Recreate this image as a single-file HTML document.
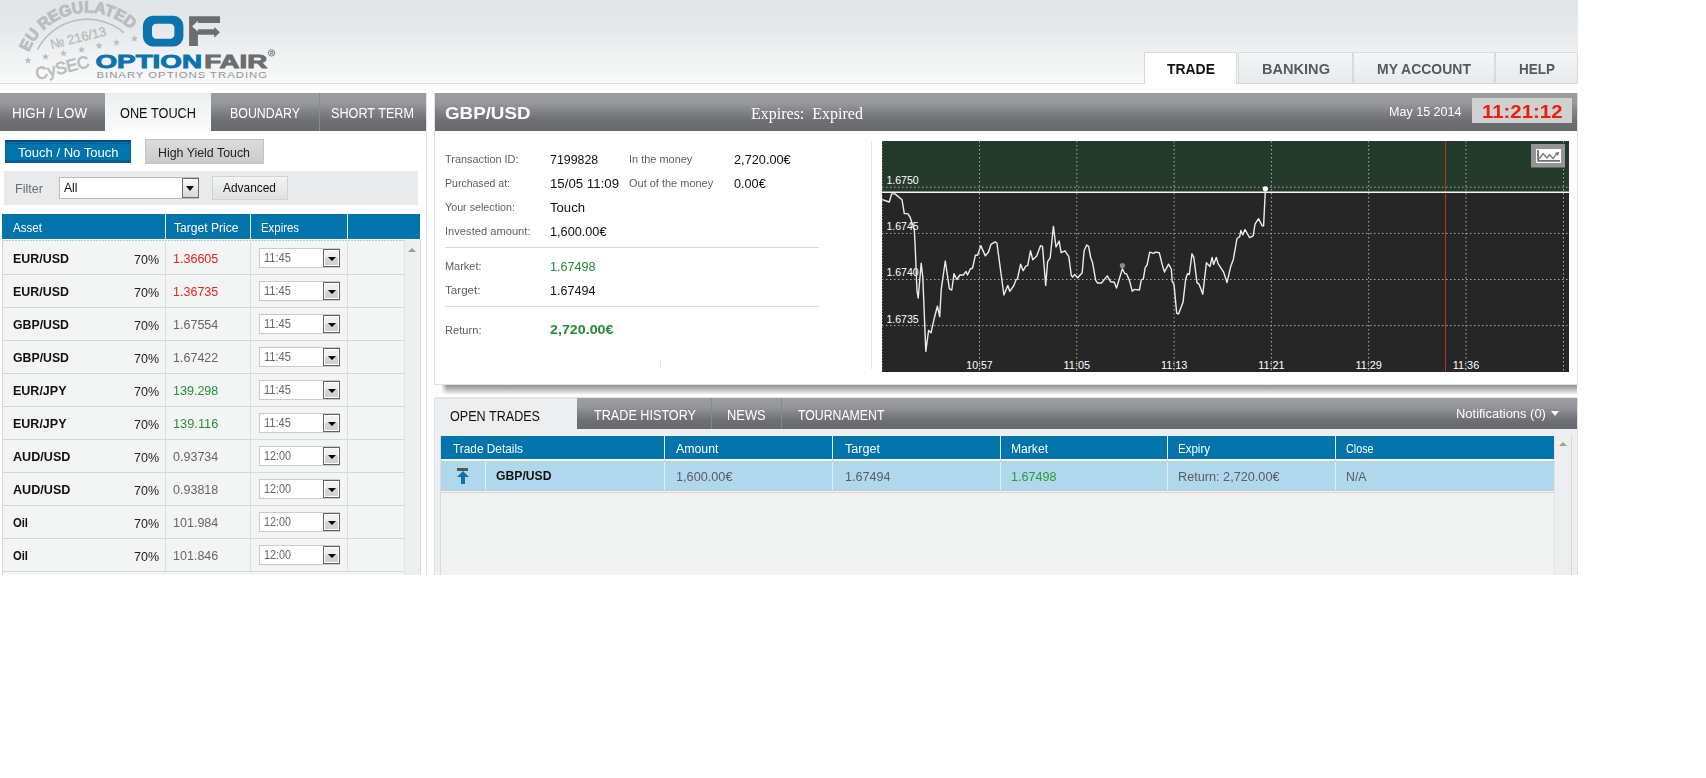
<!DOCTYPE html>
<html><head><meta charset="utf-8"><title>OptionFair</title>
<style>
html,body{margin:0;padding:0;background:#fff;}
body{width:1706px;height:778px;overflow:hidden;position:relative;font-family:"Liberation Sans",sans-serif;}
#root>div{position:absolute;}
</style></head><body><div id="root">
<div style="left:0px;top:0px;width:1578px;height:83px;background:linear-gradient(#e1e5e7 0%,#e6e9eb 35%,#f9fafa 100%);"></div>
<div style="left:0px;top:83px;width:1578px;height:1px;background:#d9e0e2;"></div>
<div style="left:1144px;top:52px;width:93px;height:32px;background:#fff;border:1px solid #d5dcdf;border-bottom:none;box-sizing:border-box;"></div>
<div style="left:1145px;top:83px;width:91px;height:1px;background:#fff;"></div>
<div style="left:1167.00px;top:59.76px;font-family:'Liberation Sans', sans-serif;font-size:14.24px;line-height:18px;font-weight:700;color:#111;white-space:nowrap;transform:scaleX(0.9783);transform-origin:0 0;">TRADE</div>
<div style="left:1238px;top:52px;width:115px;height:32px;background:linear-gradient(#f4f5f6,#e7eaeb);border:1px solid #d5dcdf;box-sizing:border-box;"></div>
<div style="left:1262.00px;top:59.76px;font-family:'Liberation Sans', sans-serif;font-size:14.24px;line-height:18px;font-weight:700;color:#555a5f;white-space:nowrap;transform:scaleX(1.0230);transform-origin:0 0;">BANKING</div>
<div style="left:1353px;top:52px;width:142px;height:32px;background:linear-gradient(#f4f5f6,#e7eaeb);border:1px solid #d5dcdf;box-sizing:border-box;"></div>
<div style="left:1377.00px;top:59.76px;font-family:'Liberation Sans', sans-serif;font-size:14.24px;line-height:18px;font-weight:700;color:#555a5f;white-space:nowrap;transform:scaleX(0.9817);transform-origin:0 0;">MY ACCOUNT</div>
<div style="left:1495px;top:52px;width:83px;height:32px;background:linear-gradient(#f4f5f6,#e7eaeb);border:1px solid #d5dcdf;box-sizing:border-box;"></div>
<div style="left:1519.00px;top:59.76px;font-family:'Liberation Sans', sans-serif;font-size:14.24px;line-height:18px;font-weight:700;color:#555a5f;white-space:nowrap;transform:scaleX(0.9476);transform-origin:0 0;">HELP</div>
<div style="left:426px;top:93px;width:1px;height:482px;background:#dfe4e6;"></div>
<div style="left:0px;top:93px;width:105px;height:38px;background:linear-gradient(#9d9ea2 0%,#96979b 28%,#7f8084 52%,#6d6e71 75%,#696a6d 100%);"></div>
<div style="left:12.00px;top:103.86px;font-family:'Liberation Sans', sans-serif;font-size:14.83px;line-height:18px;font-weight:400;color:#fff;white-space:nowrap;transform:scaleX(0.9015);transform-origin:0 0;">HIGH / LOW</div>
<div style="left:105px;top:93px;width:106px;height:38px;background:linear-gradient(#eceff0,#fafbfb);"></div>
<div style="left:120.00px;top:103.86px;font-family:'Liberation Sans', sans-serif;font-size:14.83px;line-height:18px;font-weight:400;color:#111;white-space:nowrap;transform:scaleX(0.8595);transform-origin:0 0;">ONE TOUCH</div>
<div style="left:211px;top:93px;width:108px;height:38px;background:linear-gradient(#9d9ea2 0%,#96979b 28%,#7f8084 52%,#6d6e71 75%,#696a6d 100%);"></div>
<div style="left:230.00px;top:103.86px;font-family:'Liberation Sans', sans-serif;font-size:14.83px;line-height:18px;font-weight:400;color:#fff;white-space:nowrap;transform:scaleX(0.8357);transform-origin:0 0;">BOUNDARY</div>
<div style="left:319px;top:93px;width:107px;height:38px;background:linear-gradient(#9d9ea2 0%,#96979b 28%,#7f8084 52%,#6d6e71 75%,#696a6d 100%);"></div>
<div style="left:331.00px;top:103.86px;font-family:'Liberation Sans', sans-serif;font-size:14.83px;line-height:18px;font-weight:400;color:#fff;white-space:nowrap;transform:scaleX(0.8538);transform-origin:0 0;">SHORT TERM</div>
<div style="left:319px;top:93px;width:1px;height:38px;background:#8a8b8e;"></div>
<div style="left:5px;top:140px;width:126px;height:23px;background:#0074ab;border:1px solid #0a5f95;border-top:2px solid #004b8a;box-sizing:border-box;"></div>
<div style="left:7px;top:143px;width:123px;height:1px;background:repeating-linear-gradient(90deg,#0b4f85 0 2px,transparent 2px 3px);"></div>
<div style="left:6px;top:160px;width:124px;height:2px;background:repeating-linear-gradient(90deg,#0b4f85 0 1px,#1264a0 1px 2px);"></div>
<div style="left:18.00px;top:144.01px;font-family:'Liberation Sans', sans-serif;font-size:13.52px;line-height:17px;font-weight:400;color:#fff;white-space:nowrap;transform:scaleX(0.9645);transform-origin:0 0;">Touch / No Touch</div>
<div style="left:145px;top:139px;width:119px;height:25px;background:linear-gradient(#dcdcdc,#c9caca);border:1px solid #c2c4c4;box-sizing:border-box;"></div>
<div style="left:158.00px;top:144.01px;font-family:'Liberation Sans', sans-serif;font-size:13.52px;line-height:17px;font-weight:400;color:#222;white-space:nowrap;transform:scaleX(0.9158);transform-origin:0 0;">High Yield Touch</div>
<div style="left:4px;top:171px;width:414px;height:34px;background:#e8eaeb;"></div>
<div style="left:15.30px;top:181.06px;font-family:'Liberation Sans', sans-serif;font-size:13.08px;line-height:16px;font-weight:400;color:#6b6d70;white-space:nowrap;transform:scaleX(0.9632);transform-origin:0 0;">Filter</div>
<div style="left:59px;top:177px;width:140px;height:22px;background:#fff;border:1px solid #b9bcbe;box-sizing:border-box;"></div>
<div style="left:182px;top:178px;width:17px;height:20px;background:linear-gradient(#fafafa,#d6d7d8);border:1px solid #6a6c6e;box-sizing:border-box;"></div>
<div style="left:186px;top:186px;width:0;height:0;border-left:4.5px solid transparent;border-right:4.5px solid transparent;border-top:5px solid #111;"></div>
<div style="left:64.00px;top:180.26px;font-family:'Liberation Sans', sans-serif;font-size:13.08px;line-height:16px;font-weight:400;color:#111;white-space:nowrap;transform:scaleX(0.9285);transform-origin:0 0;">All</div>
<div style="left:212px;top:176px;width:76px;height:24px;background:linear-gradient(#f3f4f4,#dfe1e2);border:1px solid #d0d3d4;box-sizing:border-box;"></div>
<div style="left:223.40px;top:180.46px;font-family:'Liberation Sans', sans-serif;font-size:13.08px;line-height:16px;font-weight:400;color:#111;white-space:nowrap;transform:scaleX(0.9109);transform-origin:0 0;">Advanced</div>
<div style="left:2px;top:214px;width:418px;height:25px;background:#0074ab;"></div>
<div style="left:165px;top:214px;width:1px;height:25px;background:#e9f1f6;"></div>
<div style="left:250px;top:214px;width:1px;height:25px;background:#e9f1f6;"></div>
<div style="left:347px;top:214px;width:1px;height:25px;background:#e9f1f6;"></div>
<div style="left:13.00px;top:219.57px;font-family:'Liberation Sans', sans-serif;font-size:12.50px;line-height:16px;font-weight:400;color:#fff;white-space:nowrap;transform:scaleX(0.9276);transform-origin:0 0;">Asset</div>
<div style="left:174.00px;top:219.57px;font-family:'Liberation Sans', sans-serif;font-size:12.50px;line-height:16px;font-weight:400;color:#fff;white-space:nowrap;transform:scaleX(0.9671);transform-origin:0 0;">Target Price</div>
<div style="left:261.30px;top:219.57px;font-family:'Liberation Sans', sans-serif;font-size:12.50px;line-height:16px;font-weight:400;color:#fff;white-space:nowrap;transform:scaleX(0.9116);transform-origin:0 0;">Expires</div>
<div style="left:2px;top:240px;width:402px;height:335px;background:#f3f4f4;"></div>
<div style="left:2px;top:240px;width:1px;height:335px;background:#d4d7d9;"></div>
<div style="left:3px;top:240px;width:401px;height:1px;background:repeating-linear-gradient(90deg,#c3c6c8 0 2px,transparent 2px 3px);"></div>
<div style="left:404px;top:240px;width:17px;height:335px;background:#eceeef;border-left:1px solid #e1e4e5;border-right:1px solid #d5d8da;box-sizing:border-box;"></div>
<div style="left:420px;top:240px;width:1px;height:335px;background:#d9dcde;"></div>
<div style="left:408px;top:248px;width:0;height:0;border-left:4px solid transparent;border-right:4px solid transparent;border-bottom:4px solid #9a9c9e;"></div>
<div style="left:2px;top:274px;width:402px;height:1px;background:#d5d8d9;"></div>
<div style="left:165px;top:241px;width:1px;height:33px;background:#dcdfe0;"></div>
<div style="left:250px;top:241px;width:1px;height:33px;background:#dcdfe0;"></div>
<div style="left:347px;top:241px;width:1px;height:33px;background:#dcdfe0;"></div>
<div style="left:13.00px;top:251.46px;font-family:'Liberation Sans', sans-serif;font-size:13.08px;line-height:16px;font-weight:700;color:#111;white-space:nowrap;transform:scaleX(0.9512);transform-origin:0 0;">EUR/USD</div>
<div style="left:133.70px;top:252.16px;font-family:'Liberation Sans', sans-serif;font-size:13.08px;line-height:16px;font-weight:400;color:#222;white-space:nowrap;transform:scaleX(0.9548);transform-origin:0 0;">70%</div>
<div style="left:173.40px;top:250.86px;font-family:'Liberation Sans', sans-serif;font-size:13.08px;line-height:16px;font-weight:400;color:#e8231a;white-space:nowrap;transform:scaleX(0.9580);transform-origin:0 0;">1.36605</div>
<div style="left:259px;top:248px;width:81px;height:20px;background:#fff;border:1px solid #c9cccd;box-sizing:border-box;"></div>
<div style="left:323px;top:249px;width:17px;height:18px;background:linear-gradient(#f4f4f5 0%,#ececed 45%,#d2d3d3 50%,#cfd0d0 100%);border:1px solid #5f6163;box-shadow:inset 0 0 0 1px #fff;box-sizing:border-box;"></div>
<div style="left:327.5px;top:257px;width:0;height:0;border-left:4px solid transparent;border-right:4px solid transparent;border-top:4.5px solid #000;"></div>
<div style="left:264.00px;top:251.22px;font-family:'Liberation Sans', sans-serif;font-size:12.35px;line-height:15px;font-weight:400;color:#666;white-space:nowrap;transform:scaleX(0.9000);transform-origin:0 0;">11:45</div>
<div style="left:2px;top:307px;width:402px;height:1px;background:#d5d8d9;"></div>
<div style="left:165px;top:274px;width:1px;height:33px;background:#dcdfe0;"></div>
<div style="left:250px;top:274px;width:1px;height:33px;background:#dcdfe0;"></div>
<div style="left:347px;top:274px;width:1px;height:33px;background:#dcdfe0;"></div>
<div style="left:13.00px;top:284.46px;font-family:'Liberation Sans', sans-serif;font-size:13.08px;line-height:16px;font-weight:700;color:#111;white-space:nowrap;transform:scaleX(0.9512);transform-origin:0 0;">EUR/USD</div>
<div style="left:133.70px;top:285.16px;font-family:'Liberation Sans', sans-serif;font-size:13.08px;line-height:16px;font-weight:400;color:#222;white-space:nowrap;transform:scaleX(0.9548);transform-origin:0 0;">70%</div>
<div style="left:173.40px;top:283.86px;font-family:'Liberation Sans', sans-serif;font-size:13.08px;line-height:16px;font-weight:400;color:#e8231a;white-space:nowrap;transform:scaleX(0.9580);transform-origin:0 0;">1.36735</div>
<div style="left:259px;top:281px;width:81px;height:20px;background:#fff;border:1px solid #c9cccd;box-sizing:border-box;"></div>
<div style="left:323px;top:282px;width:17px;height:18px;background:linear-gradient(#f4f4f5 0%,#ececed 45%,#d2d3d3 50%,#cfd0d0 100%);border:1px solid #5f6163;box-shadow:inset 0 0 0 1px #fff;box-sizing:border-box;"></div>
<div style="left:327.5px;top:290px;width:0;height:0;border-left:4px solid transparent;border-right:4px solid transparent;border-top:4.5px solid #000;"></div>
<div style="left:264.00px;top:284.22px;font-family:'Liberation Sans', sans-serif;font-size:12.35px;line-height:15px;font-weight:400;color:#666;white-space:nowrap;transform:scaleX(0.9000);transform-origin:0 0;">11:45</div>
<div style="left:2px;top:340px;width:402px;height:1px;background:#d5d8d9;"></div>
<div style="left:165px;top:307px;width:1px;height:33px;background:#dcdfe0;"></div>
<div style="left:250px;top:307px;width:1px;height:33px;background:#dcdfe0;"></div>
<div style="left:347px;top:307px;width:1px;height:33px;background:#dcdfe0;"></div>
<div style="left:13.00px;top:317.46px;font-family:'Liberation Sans', sans-serif;font-size:13.08px;line-height:16px;font-weight:700;color:#111;white-space:nowrap;transform:scaleX(0.9395);transform-origin:0 0;">GBP/USD</div>
<div style="left:133.70px;top:318.16px;font-family:'Liberation Sans', sans-serif;font-size:13.08px;line-height:16px;font-weight:400;color:#222;white-space:nowrap;transform:scaleX(0.9548);transform-origin:0 0;">70%</div>
<div style="left:173.40px;top:316.86px;font-family:'Liberation Sans', sans-serif;font-size:13.08px;line-height:16px;font-weight:400;color:#666;white-space:nowrap;transform:scaleX(0.9580);transform-origin:0 0;">1.67554</div>
<div style="left:259px;top:314px;width:81px;height:20px;background:#fff;border:1px solid #c9cccd;box-sizing:border-box;"></div>
<div style="left:323px;top:315px;width:17px;height:18px;background:linear-gradient(#f4f4f5 0%,#ececed 45%,#d2d3d3 50%,#cfd0d0 100%);border:1px solid #5f6163;box-shadow:inset 0 0 0 1px #fff;box-sizing:border-box;"></div>
<div style="left:327.5px;top:323px;width:0;height:0;border-left:4px solid transparent;border-right:4px solid transparent;border-top:4.5px solid #000;"></div>
<div style="left:264.00px;top:317.22px;font-family:'Liberation Sans', sans-serif;font-size:12.35px;line-height:15px;font-weight:400;color:#666;white-space:nowrap;transform:scaleX(0.9000);transform-origin:0 0;">11:45</div>
<div style="left:2px;top:373px;width:402px;height:1px;background:#d5d8d9;"></div>
<div style="left:165px;top:340px;width:1px;height:33px;background:#dcdfe0;"></div>
<div style="left:250px;top:340px;width:1px;height:33px;background:#dcdfe0;"></div>
<div style="left:347px;top:340px;width:1px;height:33px;background:#dcdfe0;"></div>
<div style="left:13.00px;top:350.46px;font-family:'Liberation Sans', sans-serif;font-size:13.08px;line-height:16px;font-weight:700;color:#111;white-space:nowrap;transform:scaleX(0.9395);transform-origin:0 0;">GBP/USD</div>
<div style="left:133.70px;top:351.16px;font-family:'Liberation Sans', sans-serif;font-size:13.08px;line-height:16px;font-weight:400;color:#222;white-space:nowrap;transform:scaleX(0.9548);transform-origin:0 0;">70%</div>
<div style="left:173.40px;top:349.86px;font-family:'Liberation Sans', sans-serif;font-size:13.08px;line-height:16px;font-weight:400;color:#666;white-space:nowrap;transform:scaleX(0.9580);transform-origin:0 0;">1.67422</div>
<div style="left:259px;top:347px;width:81px;height:20px;background:#fff;border:1px solid #c9cccd;box-sizing:border-box;"></div>
<div style="left:323px;top:348px;width:17px;height:18px;background:linear-gradient(#f4f4f5 0%,#ececed 45%,#d2d3d3 50%,#cfd0d0 100%);border:1px solid #5f6163;box-shadow:inset 0 0 0 1px #fff;box-sizing:border-box;"></div>
<div style="left:327.5px;top:356px;width:0;height:0;border-left:4px solid transparent;border-right:4px solid transparent;border-top:4.5px solid #000;"></div>
<div style="left:264.00px;top:350.22px;font-family:'Liberation Sans', sans-serif;font-size:12.35px;line-height:15px;font-weight:400;color:#666;white-space:nowrap;transform:scaleX(0.9000);transform-origin:0 0;">11:45</div>
<div style="left:2px;top:406px;width:402px;height:1px;background:#d5d8d9;"></div>
<div style="left:165px;top:373px;width:1px;height:33px;background:#dcdfe0;"></div>
<div style="left:250px;top:373px;width:1px;height:33px;background:#dcdfe0;"></div>
<div style="left:347px;top:373px;width:1px;height:33px;background:#dcdfe0;"></div>
<div style="left:13.00px;top:383.46px;font-family:'Liberation Sans', sans-serif;font-size:13.08px;line-height:16px;font-weight:700;color:#111;white-space:nowrap;transform:scaleX(0.9557);transform-origin:0 0;">EUR/JPY</div>
<div style="left:133.70px;top:384.16px;font-family:'Liberation Sans', sans-serif;font-size:13.08px;line-height:16px;font-weight:400;color:#222;white-space:nowrap;transform:scaleX(0.9548);transform-origin:0 0;">70%</div>
<div style="left:173.40px;top:382.86px;font-family:'Liberation Sans', sans-serif;font-size:13.08px;line-height:16px;font-weight:400;color:#26903a;white-space:nowrap;transform:scaleX(0.9580);transform-origin:0 0;">139.298</div>
<div style="left:259px;top:380px;width:81px;height:20px;background:#fff;border:1px solid #c9cccd;box-sizing:border-box;"></div>
<div style="left:323px;top:381px;width:17px;height:18px;background:linear-gradient(#f4f4f5 0%,#ececed 45%,#d2d3d3 50%,#cfd0d0 100%);border:1px solid #5f6163;box-shadow:inset 0 0 0 1px #fff;box-sizing:border-box;"></div>
<div style="left:327.5px;top:389px;width:0;height:0;border-left:4px solid transparent;border-right:4px solid transparent;border-top:4.5px solid #000;"></div>
<div style="left:264.00px;top:383.22px;font-family:'Liberation Sans', sans-serif;font-size:12.35px;line-height:15px;font-weight:400;color:#666;white-space:nowrap;transform:scaleX(0.9000);transform-origin:0 0;">11:45</div>
<div style="left:2px;top:439px;width:402px;height:1px;background:#d5d8d9;"></div>
<div style="left:165px;top:406px;width:1px;height:33px;background:#dcdfe0;"></div>
<div style="left:250px;top:406px;width:1px;height:33px;background:#dcdfe0;"></div>
<div style="left:347px;top:406px;width:1px;height:33px;background:#dcdfe0;"></div>
<div style="left:13.00px;top:416.46px;font-family:'Liberation Sans', sans-serif;font-size:13.08px;line-height:16px;font-weight:700;color:#111;white-space:nowrap;transform:scaleX(0.9557);transform-origin:0 0;">EUR/JPY</div>
<div style="left:133.70px;top:417.16px;font-family:'Liberation Sans', sans-serif;font-size:13.08px;line-height:16px;font-weight:400;color:#222;white-space:nowrap;transform:scaleX(0.9548);transform-origin:0 0;">70%</div>
<div style="left:173.40px;top:415.86px;font-family:'Liberation Sans', sans-serif;font-size:13.08px;line-height:16px;font-weight:400;color:#26903a;white-space:nowrap;transform:scaleX(0.9780);transform-origin:0 0;">139.116</div>
<div style="left:259px;top:413px;width:81px;height:20px;background:#fff;border:1px solid #c9cccd;box-sizing:border-box;"></div>
<div style="left:323px;top:414px;width:17px;height:18px;background:linear-gradient(#f4f4f5 0%,#ececed 45%,#d2d3d3 50%,#cfd0d0 100%);border:1px solid #5f6163;box-shadow:inset 0 0 0 1px #fff;box-sizing:border-box;"></div>
<div style="left:327.5px;top:422px;width:0;height:0;border-left:4px solid transparent;border-right:4px solid transparent;border-top:4.5px solid #000;"></div>
<div style="left:264.00px;top:416.22px;font-family:'Liberation Sans', sans-serif;font-size:12.35px;line-height:15px;font-weight:400;color:#666;white-space:nowrap;transform:scaleX(0.9000);transform-origin:0 0;">11:45</div>
<div style="left:2px;top:472px;width:402px;height:1px;background:#d5d8d9;"></div>
<div style="left:165px;top:439px;width:1px;height:33px;background:#dcdfe0;"></div>
<div style="left:250px;top:439px;width:1px;height:33px;background:#dcdfe0;"></div>
<div style="left:347px;top:439px;width:1px;height:33px;background:#dcdfe0;"></div>
<div style="left:13.00px;top:449.46px;font-family:'Liberation Sans', sans-serif;font-size:13.08px;line-height:16px;font-weight:700;color:#111;white-space:nowrap;transform:scaleX(0.9648);transform-origin:0 0;">AUD/USD</div>
<div style="left:133.70px;top:450.16px;font-family:'Liberation Sans', sans-serif;font-size:13.08px;line-height:16px;font-weight:400;color:#222;white-space:nowrap;transform:scaleX(0.9548);transform-origin:0 0;">70%</div>
<div style="left:173.40px;top:448.86px;font-family:'Liberation Sans', sans-serif;font-size:13.08px;line-height:16px;font-weight:400;color:#666;white-space:nowrap;transform:scaleX(0.9580);transform-origin:0 0;">0.93734</div>
<div style="left:259px;top:446px;width:81px;height:20px;background:#fff;border:1px solid #c9cccd;box-sizing:border-box;"></div>
<div style="left:323px;top:447px;width:17px;height:18px;background:linear-gradient(#f4f4f5 0%,#ececed 45%,#d2d3d3 50%,#cfd0d0 100%);border:1px solid #5f6163;box-shadow:inset 0 0 0 1px #fff;box-sizing:border-box;"></div>
<div style="left:327.5px;top:455px;width:0;height:0;border-left:4px solid transparent;border-right:4px solid transparent;border-top:4.5px solid #000;"></div>
<div style="left:264.00px;top:449.22px;font-family:'Liberation Sans', sans-serif;font-size:12.35px;line-height:15px;font-weight:400;color:#666;white-space:nowrap;transform:scaleX(0.8733);transform-origin:0 0;">12:00</div>
<div style="left:2px;top:505px;width:402px;height:1px;background:#d5d8d9;"></div>
<div style="left:165px;top:472px;width:1px;height:33px;background:#dcdfe0;"></div>
<div style="left:250px;top:472px;width:1px;height:33px;background:#dcdfe0;"></div>
<div style="left:347px;top:472px;width:1px;height:33px;background:#dcdfe0;"></div>
<div style="left:13.00px;top:482.46px;font-family:'Liberation Sans', sans-serif;font-size:13.08px;line-height:16px;font-weight:700;color:#111;white-space:nowrap;transform:scaleX(0.9648);transform-origin:0 0;">AUD/USD</div>
<div style="left:133.70px;top:483.16px;font-family:'Liberation Sans', sans-serif;font-size:13.08px;line-height:16px;font-weight:400;color:#222;white-space:nowrap;transform:scaleX(0.9548);transform-origin:0 0;">70%</div>
<div style="left:173.40px;top:481.86px;font-family:'Liberation Sans', sans-serif;font-size:13.08px;line-height:16px;font-weight:400;color:#666;white-space:nowrap;transform:scaleX(0.9580);transform-origin:0 0;">0.93818</div>
<div style="left:259px;top:479px;width:81px;height:20px;background:#fff;border:1px solid #c9cccd;box-sizing:border-box;"></div>
<div style="left:323px;top:480px;width:17px;height:18px;background:linear-gradient(#f4f4f5 0%,#ececed 45%,#d2d3d3 50%,#cfd0d0 100%);border:1px solid #5f6163;box-shadow:inset 0 0 0 1px #fff;box-sizing:border-box;"></div>
<div style="left:327.5px;top:488px;width:0;height:0;border-left:4px solid transparent;border-right:4px solid transparent;border-top:4.5px solid #000;"></div>
<div style="left:264.00px;top:482.22px;font-family:'Liberation Sans', sans-serif;font-size:12.35px;line-height:15px;font-weight:400;color:#666;white-space:nowrap;transform:scaleX(0.8733);transform-origin:0 0;">12:00</div>
<div style="left:2px;top:538px;width:402px;height:1px;background:#d5d8d9;"></div>
<div style="left:165px;top:505px;width:1px;height:33px;background:#dcdfe0;"></div>
<div style="left:250px;top:505px;width:1px;height:33px;background:#dcdfe0;"></div>
<div style="left:347px;top:505px;width:1px;height:33px;background:#dcdfe0;"></div>
<div style="left:13.00px;top:515.46px;font-family:'Liberation Sans', sans-serif;font-size:13.08px;line-height:16px;font-weight:700;color:#111;white-space:nowrap;transform:scaleX(0.8599);transform-origin:0 0;">Oil</div>
<div style="left:133.70px;top:516.16px;font-family:'Liberation Sans', sans-serif;font-size:13.08px;line-height:16px;font-weight:400;color:#222;white-space:nowrap;transform:scaleX(0.9548);transform-origin:0 0;">70%</div>
<div style="left:173.40px;top:514.86px;font-family:'Liberation Sans', sans-serif;font-size:13.08px;line-height:16px;font-weight:400;color:#666;white-space:nowrap;transform:scaleX(0.9580);transform-origin:0 0;">101.984</div>
<div style="left:259px;top:512px;width:81px;height:20px;background:#fff;border:1px solid #c9cccd;box-sizing:border-box;"></div>
<div style="left:323px;top:513px;width:17px;height:18px;background:linear-gradient(#f4f4f5 0%,#ececed 45%,#d2d3d3 50%,#cfd0d0 100%);border:1px solid #5f6163;box-shadow:inset 0 0 0 1px #fff;box-sizing:border-box;"></div>
<div style="left:327.5px;top:521px;width:0;height:0;border-left:4px solid transparent;border-right:4px solid transparent;border-top:4.5px solid #000;"></div>
<div style="left:264.00px;top:515.22px;font-family:'Liberation Sans', sans-serif;font-size:12.35px;line-height:15px;font-weight:400;color:#666;white-space:nowrap;transform:scaleX(0.8733);transform-origin:0 0;">12:00</div>
<div style="left:2px;top:571px;width:402px;height:1px;background:#d5d8d9;"></div>
<div style="left:165px;top:538px;width:1px;height:33px;background:#dcdfe0;"></div>
<div style="left:250px;top:538px;width:1px;height:33px;background:#dcdfe0;"></div>
<div style="left:347px;top:538px;width:1px;height:33px;background:#dcdfe0;"></div>
<div style="left:13.00px;top:548.46px;font-family:'Liberation Sans', sans-serif;font-size:13.08px;line-height:16px;font-weight:700;color:#111;white-space:nowrap;transform:scaleX(0.8599);transform-origin:0 0;">Oil</div>
<div style="left:133.70px;top:549.16px;font-family:'Liberation Sans', sans-serif;font-size:13.08px;line-height:16px;font-weight:400;color:#222;white-space:nowrap;transform:scaleX(0.9548);transform-origin:0 0;">70%</div>
<div style="left:173.40px;top:547.86px;font-family:'Liberation Sans', sans-serif;font-size:13.08px;line-height:16px;font-weight:400;color:#666;white-space:nowrap;transform:scaleX(0.9580);transform-origin:0 0;">101.846</div>
<div style="left:259px;top:545px;width:81px;height:20px;background:#fff;border:1px solid #c9cccd;box-sizing:border-box;"></div>
<div style="left:323px;top:546px;width:17px;height:18px;background:linear-gradient(#f4f4f5 0%,#ececed 45%,#d2d3d3 50%,#cfd0d0 100%);border:1px solid #5f6163;box-shadow:inset 0 0 0 1px #fff;box-sizing:border-box;"></div>
<div style="left:327.5px;top:554px;width:0;height:0;border-left:4px solid transparent;border-right:4px solid transparent;border-top:4.5px solid #000;"></div>
<div style="left:264.00px;top:548.22px;font-family:'Liberation Sans', sans-serif;font-size:12.35px;line-height:15px;font-weight:400;color:#666;white-space:nowrap;transform:scaleX(0.8733);transform-origin:0 0;">12:00</div>
<div style="left:441px;top:385px;width:1136px;height:10px;background:linear-gradient(#949598 0%,#a6a7aa 25%,#c3c4c6 50%,#e4e5e6 80%,#fff 100%);-webkit-mask-image:linear-gradient(90deg,transparent 0,#000 6px);"></div>
<div style="left:434px;top:93px;width:1144px;height:292px;background:#fff;border-left:1px solid #dde2e4;border-right:1px solid #dde2e4;border-bottom:1px solid #dfe3e5;box-sizing:border-box;"></div>
<div style="left:435px;top:93px;width:1142px;height:38px;background:linear-gradient(#9d9ea2 0%,#96979b 28%,#7f8084 52%,#6d6e71 75%,#696a6d 100%);"></div>
<div style="left:445.20px;top:103.66px;font-family:'Liberation Sans', sans-serif;font-size:16.57px;line-height:20px;font-weight:700;color:#fff;white-space:nowrap;transform:scaleX(1.1325);transform-origin:0 0;">GBP/USD</div>
<div style="left:751.00px;top:104.23px;font-family:'Liberation Serif', serif;font-size:16.49px;line-height:20px;font-weight:400;color:#fff;white-space:nowrap;transform:scaleX(0.9703);transform-origin:0 0;">Expires:&nbsp; Expired</div>
<div style="left:1389.00px;top:104.27px;font-family:'Liberation Sans', sans-serif;font-size:12.50px;line-height:16px;font-weight:400;color:#fff;white-space:nowrap;transform:scaleX(1.0031);transform-origin:0 0;">May 15 2014</div>
<div style="left:1472px;top:98px;width:100px;height:25px;background:#cfd1d1;"></div>
<div style="left:1482.00px;top:99.95px;font-family:'Liberation Sans', sans-serif;font-size:18.90px;line-height:23px;font-weight:700;color:#ee1d0b;white-space:nowrap;transform:scaleX(1.0791);transform-origin:0 0;">11:21:12</div>
<div style="left:444.50px;top:151.97px;font-family:'Liberation Sans', sans-serif;font-size:11.63px;line-height:14px;font-weight:400;color:#5c5f62;white-space:nowrap;transform:scaleX(0.9374);transform-origin:0 0;">Transaction ID:</div>
<div style="left:550.30px;top:151.77px;font-family:'Liberation Sans', sans-serif;font-size:12.50px;line-height:16px;font-weight:400;color:#111;white-space:nowrap;transform:scaleX(0.9904);transform-origin:0 0;">7199828</div>
<div style="left:628.70px;top:152.37px;font-family:'Liberation Sans', sans-serif;font-size:11.63px;line-height:14px;font-weight:400;color:#5c5f62;white-space:nowrap;transform:scaleX(0.9416);transform-origin:0 0;">In the money</div>
<div style="left:734.20px;top:151.87px;font-family:'Liberation Sans', sans-serif;font-size:12.50px;line-height:16px;font-weight:400;color:#111;white-space:nowrap;transform:scaleX(1.0196);transform-origin:0 0;">2,720.00€</div>
<div style="left:444.50px;top:175.97px;font-family:'Liberation Sans', sans-serif;font-size:11.63px;line-height:14px;font-weight:400;color:#5c5f62;white-space:nowrap;transform:scaleX(0.9059);transform-origin:0 0;">Purchased at:</div>
<div style="left:550.30px;top:175.77px;font-family:'Liberation Sans', sans-serif;font-size:12.50px;line-height:16px;font-weight:400;color:#111;white-space:nowrap;transform:scaleX(1.0598);transform-origin:0 0;">15/05 11:09</div>
<div style="left:628.70px;top:176.17px;font-family:'Liberation Sans', sans-serif;font-size:11.63px;line-height:14px;font-weight:400;color:#5c5f62;white-space:nowrap;transform:scaleX(0.9440);transform-origin:0 0;">Out of the money</div>
<div style="left:734.20px;top:175.77px;font-family:'Liberation Sans', sans-serif;font-size:12.50px;line-height:16px;font-weight:400;color:#111;white-space:nowrap;transform:scaleX(1.0134);transform-origin:0 0;">0.00€</div>
<div style="left:444.50px;top:199.97px;font-family:'Liberation Sans', sans-serif;font-size:11.63px;line-height:14px;font-weight:400;color:#5c5f62;white-space:nowrap;transform:scaleX(0.9229);transform-origin:0 0;">Your selection:</div>
<div style="left:550.30px;top:199.97px;font-family:'Liberation Sans', sans-serif;font-size:12.50px;line-height:16px;font-weight:400;color:#111;white-space:nowrap;transform:scaleX(1.0493);transform-origin:0 0;">Touch</div>
<div style="left:444.50px;top:223.97px;font-family:'Liberation Sans', sans-serif;font-size:11.63px;line-height:14px;font-weight:400;color:#5c5f62;white-space:nowrap;transform:scaleX(0.9585);transform-origin:0 0;">Invested amount:</div>
<div style="left:550.30px;top:223.77px;font-family:'Liberation Sans', sans-serif;font-size:12.50px;line-height:16px;font-weight:400;color:#111;white-space:nowrap;transform:scaleX(1.0160);transform-origin:0 0;">1,600.00€</div>
<div style="left:445px;top:247px;width:374px;height:1px;background:#d6d9db;"></div>
<div style="left:444.50px;top:258.97px;font-family:'Liberation Sans', sans-serif;font-size:11.63px;line-height:14px;font-weight:400;color:#5c5f62;white-space:nowrap;transform:scaleX(0.9415);transform-origin:0 0;">Market:</div>
<div style="left:550.30px;top:258.77px;font-family:'Liberation Sans', sans-serif;font-size:12.50px;line-height:16px;font-weight:400;color:#238a3a;white-space:nowrap;transform:scaleX(1.0069);transform-origin:0 0;">1.67498</div>
<div style="left:444.50px;top:282.97px;font-family:'Liberation Sans', sans-serif;font-size:11.63px;line-height:14px;font-weight:400;color:#5c5f62;white-space:nowrap;transform:scaleX(0.9986);transform-origin:0 0;">Target:</div>
<div style="left:550.30px;top:282.77px;font-family:'Liberation Sans', sans-serif;font-size:12.50px;line-height:16px;font-weight:400;color:#111;white-space:nowrap;transform:scaleX(1.0069);transform-origin:0 0;">1.67494</div>
<div style="left:445px;top:306px;width:374px;height:1px;background:#d6d9db;"></div>
<div style="left:444.50px;top:322.97px;font-family:'Liberation Sans', sans-serif;font-size:11.63px;line-height:14px;font-weight:400;color:#5c5f62;white-space:nowrap;transform:scaleX(0.9572);transform-origin:0 0;">Return:</div>
<div style="left:550.30px;top:321.97px;font-family:'Liberation Sans', sans-serif;font-size:12.79px;line-height:16px;font-weight:700;color:#238a35;white-space:nowrap;transform:scaleX(1.1159);transform-origin:0 0;">2,720.00€</div>
<div style="left:660px;top:361px;width:1px;height:8px;background:#e3e5e6;"></div>
<div style="left:871px;top:141px;width:1px;height:228px;background:#e1e4e6;"></div>
<svg style="position:absolute;left:882px;top:141px;" width="687" height="231"><rect x="0" y="0" width="687" height="51.5" fill="#243a2b"/><rect x="0" y="51.5" width="687" height="179.5" fill="#262626"/><line x1="0" y1="46.19999999999999" x2="687" y2="46.19999999999999" stroke="#a9aaa9" stroke-width="1" stroke-dasharray="1.5,2.5"/><line x1="0" y1="92.4" x2="687" y2="92.4" stroke="#a9aaa9" stroke-width="1" stroke-dasharray="1.5,2.5"/><line x1="0" y1="138.5" x2="687" y2="138.5" stroke="#a9aaa9" stroke-width="1" stroke-dasharray="1.5,2.5"/><line x1="0" y1="184.60000000000002" x2="687" y2="184.60000000000002" stroke="#a9aaa9" stroke-width="1" stroke-dasharray="1.5,2.5"/><line x1="97.5" y1="0" x2="97.5" y2="231" stroke="#a9aaa9" stroke-width="1" stroke-dasharray="1.5,2.5"/><line x1="194.79999999999995" y1="0" x2="194.79999999999995" y2="231" stroke="#a9aaa9" stroke-width="1" stroke-dasharray="1.5,2.5"/><line x1="292.0999999999999" y1="0" x2="292.0999999999999" y2="231" stroke="#a9aaa9" stroke-width="1" stroke-dasharray="1.5,2.5"/><line x1="389.4000000000001" y1="0" x2="389.4000000000001" y2="231" stroke="#a9aaa9" stroke-width="1" stroke-dasharray="1.5,2.5"/><line x1="486.70000000000005" y1="0" x2="486.70000000000005" y2="231" stroke="#a9aaa9" stroke-width="1" stroke-dasharray="1.5,2.5"/><line x1="584" y1="0" x2="584" y2="231" stroke="#a9aaa9" stroke-width="1" stroke-dasharray="1.5,2.5"/><line x1="681.5" y1="0" x2="681.5" y2="231" stroke="#a9aaa9" stroke-width="1" stroke-dasharray="1.5,2.5"/><line x1="0.5" y1="0" x2="0.5" y2="231" stroke="#777" stroke-width="1" stroke-dasharray="1,2"/><line x1="563.5" y1="0" x2="563.5" y2="231" stroke="#b8361c" stroke-width="1"/><line x1="0" y1="51.30000000000001" x2="687" y2="51.30000000000001" stroke="#f4f4f4" stroke-width="1.6"/><text x="4.399999999999977" y="42.900000000000006" font-family="Liberation Sans" font-size="11.2" fill="#fff" textLength="32.3" lengthAdjust="spacingAndGlyphs">1.6750</text><text x="4.399999999999977" y="88.80000000000001" font-family="Liberation Sans" font-size="11.2" fill="#fff" textLength="32.3" lengthAdjust="spacingAndGlyphs">1.6745</text><text x="4.399999999999977" y="135.2" font-family="Liberation Sans" font-size="11.2" fill="#fff" textLength="32.3" lengthAdjust="spacingAndGlyphs">1.6740</text><text x="4.399999999999977" y="181.8" font-family="Liberation Sans" font-size="11.2" fill="#fff" textLength="32.3" lengthAdjust="spacingAndGlyphs">1.6735</text><text x="84.3" y="227.5" font-family="Liberation Sans" font-size="11.2" fill="#fff" textLength="26.4" lengthAdjust="spacingAndGlyphs">10:57</text><text x="181.59999999999997" y="227.5" font-family="Liberation Sans" font-size="11.2" fill="#fff" textLength="26.4" lengthAdjust="spacingAndGlyphs">11:05</text><text x="278.8999999999999" y="227.5" font-family="Liberation Sans" font-size="11.2" fill="#fff" textLength="26.4" lengthAdjust="spacingAndGlyphs">11:13</text><text x="376.2000000000001" y="227.5" font-family="Liberation Sans" font-size="11.2" fill="#fff" textLength="26.4" lengthAdjust="spacingAndGlyphs">11:21</text><text x="473.50000000000006" y="227.5" font-family="Liberation Sans" font-size="11.2" fill="#fff" textLength="26.4" lengthAdjust="spacingAndGlyphs">11:29</text><text x="570.8" y="227.5" font-family="Liberation Sans" font-size="11.2" fill="#fff" textLength="26.4" lengthAdjust="spacingAndGlyphs">11:36</text><path d="M0.3,58.7 L7.3,61.0 L9.6,52.9 L13.0,52.9 L20.0,58.7 L22.3,72.6 L25.8,72.6 L28.0,76.0 L32.3,88.8 L33.2,106.0 L35.0,150.0 L36.2,157.0 L39.2,122.3 L40.8,136.2 L43.8,210.3 L46.6,189.5 L49.0,191.8 L52.4,176.7 L55.4,165.2 L57.7,175.6 L59.3,147.8 L63.3,120.0 L67.4,147.8 L69.8,149.0 L72.0,132.8 L74.9,138.5 L77.9,134.0 L81.3,134.0 L84.0,130.4 L85.5,134.0 L88.3,128.0 L90.6,127.0 L93.4,114.2 L95.6,114.3 L98.8,104.6 L103.3,114.9 L106.5,111.0 L109.0,103.3 L113.0,100.8 L114.9,102.0 L121.9,154.0 L125.8,144.5 L127.7,150.3 L131.6,145.0 L134.1,138.7 L135.4,138.0 L138.6,123.3 L141.2,129.7 L143.8,125.2 L145.7,124.6 L148.5,109.8 L150.8,118.8 L154.7,115.0 L158.6,104.6 L160.5,105.3 L163.7,144.5 L165.6,120.7 L168.2,116.8 L171.4,85.4 L174.0,106.0 L177.2,100.1 L179.1,111.7 L183.0,109.8 L186.8,115.6 L189.3,134.3 L190.6,136.2 L192.5,133.6 L195.7,136.8 L200.2,131.7 L202.1,109.8 L204.7,104.0 L206.6,105.3 L208.6,116.3 L210.5,121.4 L213.7,139.4 L215.6,142.0 L219.5,142.0 L225.3,134.9 L228.5,140.7 L232.3,141.3 L234.5,147.1 L240.4,127.8 L242.6,132.3 L244.6,133.0 L247.4,139.4 L250.3,150.3 L252.3,148.4 L257.4,149.0 L259.3,138.8 L261.3,138.1 L263.2,126.6 L265.1,124.0 L267.7,111.1 L271.5,112.4 L273.5,111.1 L277.3,111.8 L280.5,124.6 L282.5,131.0 L286.6,123.2 L289.3,128.0 L290.2,140.7 L292.0,143.4 L294.7,172.1 L296.5,173.0 L301.0,161.3 L303.7,138.0 L305.5,132.6 L307.3,133.5 L310.0,112.8 L311.8,116.4 L315.0,141.6 L317.2,143.4 L320.8,153.2 L324.4,121.8 L328.0,125.4 L330.1,116.4 L331.6,123.6 L334.3,116.4 L336.1,122.7 L341.5,130.8 L345.0,141.6 L348.7,125.4 L351.4,118.2 L355.0,97.5 L357.7,95.7 L358.9,89.4 L360.7,93.9 L363.0,88.5 L367.6,96.6 L371.2,94.8 L373.0,83.1 L376.6,77.7 L380.2,84.9 L381.6,84.9 L383.4,48.0" fill="none" stroke="#ececec" stroke-width="1.4" stroke-linejoin="round"/><circle cx="383.4000000000001" cy="47.80000000000001" r="2.6" fill="#fff"/><circle cx="240.4000000000001" cy="124.60000000000002" r="2.6" fill="#8a8a8a"/><rect x="649" y="3" width="34" height="23.5" fill="#939597"/><rect x="654" y="8" width="25" height="14" fill="#fff"/><path d="M656.0999999999999,9 V19.80000000000001 H678" fill="none" stroke="#6f6f6f" stroke-width="1.8"/><path d="M657.4000000000001,17.5 L661.0999999999999,12.5 L664.9000000000001,16.900000000000006 L667.7,13.800000000000011 L671,17.5 L675,12.599999999999994" fill="none" stroke="#777" stroke-width="1.4"/><path d="M677.2,10.800000000000011 L672.8,11.900000000000006 L676.0999999999999,15 Z" fill="#777"/></svg>
<div style="left:434px;top:398px;width:1144px;height:177px;background:#eceeef;border-left:1px solid #dde2e4;border-right:1px solid #dde2e4;box-sizing:border-box;"></div>
<div style="left:435px;top:397px;width:1142px;height:2px;background:#e2e4e5;"></div>
<div style="left:577px;top:398px;width:1000px;height:31px;background:linear-gradient(#9d9ea2 0%,#96979b 28%,#7f8084 52%,#6d6e71 75%,#696a6d 100%);"></div>
<div style="left:711px;top:398px;width:1px;height:31px;background:#87888b;"></div>
<div style="left:781px;top:398px;width:1px;height:31px;background:#87888b;"></div>
<div style="left:450.00px;top:406.66px;font-family:'Liberation Sans', sans-serif;font-size:14.83px;line-height:18px;font-weight:400;color:#111;white-space:nowrap;transform:scaleX(0.8490);transform-origin:0 0;">OPEN TRADES</div>
<div style="left:593.60px;top:405.86px;font-family:'Liberation Sans', sans-serif;font-size:14.83px;line-height:18px;font-weight:400;color:#fff;white-space:nowrap;transform:scaleX(0.8519);transform-origin:0 0;">TRADE HISTORY</div>
<div style="left:727.00px;top:405.86px;font-family:'Liberation Sans', sans-serif;font-size:14.83px;line-height:18px;font-weight:400;color:#fff;white-space:nowrap;transform:scaleX(0.8701);transform-origin:0 0;">NEWS</div>
<div style="left:797.90px;top:405.86px;font-family:'Liberation Sans', sans-serif;font-size:14.83px;line-height:18px;font-weight:400;color:#fff;white-space:nowrap;transform:scaleX(0.8281);transform-origin:0 0;">TOURNAMENT</div>
<div style="left:1456.00px;top:406.37px;font-family:'Liberation Sans', sans-serif;font-size:12.79px;line-height:16px;font-weight:400;color:#fff;white-space:nowrap;transform:scaleX(1.0129);transform-origin:0 0;">Notifications (0)</div>
<div style="left:1551px;top:411px;width:0;height:0;border-left:4px solid transparent;border-right:4px solid transparent;border-bottom:none;border-top:5px solid #fff;"></div>
<div style="left:440px;top:436px;width:1115px;height:139px;background:#f1f2f2;border-left:1px solid #d8dbdd;box-sizing:border-box;"></div>
<div style="left:441px;top:436px;width:1113px;height:23px;background:#0074ab;"></div>
<div style="left:664px;top:436px;width:1px;height:23px;background:#eaf2f7;"></div>
<div style="left:832px;top:436px;width:1px;height:23px;background:#eaf2f7;"></div>
<div style="left:1000px;top:436px;width:1px;height:23px;background:#eaf2f7;"></div>
<div style="left:1167px;top:436px;width:1px;height:23px;background:#eaf2f7;"></div>
<div style="left:1335px;top:436px;width:1px;height:23px;background:#eaf2f7;"></div>
<div style="left:452.50px;top:440.67px;font-family:'Liberation Sans', sans-serif;font-size:12.50px;line-height:16px;font-weight:400;color:#fff;white-space:nowrap;transform:scaleX(0.9476);transform-origin:0 0;">Trade Details</div>
<div style="left:676.00px;top:440.57px;font-family:'Liberation Sans', sans-serif;font-size:12.50px;line-height:16px;font-weight:400;color:#fff;white-space:nowrap;transform:scaleX(0.9865);transform-origin:0 0;">Amount</div>
<div style="left:844.70px;top:440.57px;font-family:'Liberation Sans', sans-serif;font-size:12.50px;line-height:16px;font-weight:400;color:#fff;white-space:nowrap;transform:scaleX(1.0074);transform-origin:0 0;">Target</div>
<div style="left:1011.00px;top:440.57px;font-family:'Liberation Sans', sans-serif;font-size:12.50px;line-height:16px;font-weight:400;color:#fff;white-space:nowrap;transform:scaleX(0.9685);transform-origin:0 0;">Market</div>
<div style="left:1178.30px;top:440.57px;font-family:'Liberation Sans', sans-serif;font-size:12.50px;line-height:16px;font-weight:400;color:#fff;white-space:nowrap;transform:scaleX(0.9214);transform-origin:0 0;">Expiry</div>
<div style="left:1346.20px;top:440.57px;font-family:'Liberation Sans', sans-serif;font-size:12.50px;line-height:16px;font-weight:400;color:#fff;white-space:nowrap;transform:scaleX(0.8605);transform-origin:0 0;">Close</div>
<div style="left:441px;top:459px;width:1113px;height:2px;background:#f4f6f7;"></div>
<div style="left:441px;top:461px;width:1113px;height:1px;background:#c9cdcf;"></div>
<div style="left:441px;top:462px;width:1113px;height:28px;background:#b0d8ec;"></div>
<div style="left:441px;top:490px;width:1113px;height:1px;background:#c6cacc;"></div>
<div style="left:441px;top:491px;width:1113px;height:1px;background:#f6f7f7;"></div>
<div style="left:441px;top:492px;width:1113px;height:1px;background:#d0d3d5;"></div>
<div style="left:485px;top:462px;width:1px;height:28px;background:#e2eef4;"></div>
<div style="left:664px;top:462px;width:1px;height:28px;background:#e2eef4;"></div>
<div style="left:832px;top:462px;width:1px;height:28px;background:#e2eef4;"></div>
<div style="left:1000px;top:462px;width:1px;height:28px;background:#e2eef4;"></div>
<div style="left:1167px;top:462px;width:1px;height:28px;background:#e2eef4;"></div>
<div style="left:1335px;top:462px;width:1px;height:28px;background:#e2eef4;"></div>
<div style="left:457px;top:468px;width:11px;height:2.5px;background:#555;"></div>
<div style="left:456.5px;top:471px;width:0;height:0;border-left:6px solid transparent;border-right:6px solid transparent;border-bottom:6px solid #0b74ad;"></div>
<div style="left:461px;top:476px;width:4px;height:8px;background:#0b74ad;"></div>
<div style="left:496.00px;top:468.27px;font-family:'Liberation Sans', sans-serif;font-size:12.79px;line-height:16px;font-weight:700;color:#111;white-space:nowrap;transform:scaleX(0.9540);transform-origin:0 0;">GBP/USD</div>
<div style="left:676.00px;top:468.57px;font-family:'Liberation Sans', sans-serif;font-size:12.50px;line-height:16px;font-weight:400;color:#5a5d60;white-space:nowrap;transform:scaleX(1.0160);transform-origin:0 0;">1,600.00€</div>
<div style="left:844.70px;top:468.57px;font-family:'Liberation Sans', sans-serif;font-size:12.50px;line-height:16px;font-weight:400;color:#5a5d60;white-space:nowrap;transform:scaleX(1.0069);transform-origin:0 0;">1.67494</div>
<div style="left:1010.50px;top:468.57px;font-family:'Liberation Sans', sans-serif;font-size:12.50px;line-height:16px;font-weight:400;color:#2c9a3c;white-space:nowrap;transform:scaleX(1.0069);transform-origin:0 0;">1.67498</div>
<div style="left:1178.30px;top:468.57px;font-family:'Liberation Sans', sans-serif;font-size:12.50px;line-height:16px;font-weight:400;color:#5a5d60;white-space:nowrap;transform:scaleX(1.0142);transform-origin:0 0;">Return: 2,720.00€</div>
<div style="left:1346.20px;top:468.57px;font-family:'Liberation Sans', sans-serif;font-size:12.50px;line-height:16px;font-weight:400;color:#5a5d60;white-space:nowrap;transform:scaleX(0.9838);transform-origin:0 0;">N/A</div>
<div style="left:1554px;top:436px;width:18px;height:139px;background:#eceeef;border-left:1px solid #e1e4e5;border-right:1px solid #d5d8da;box-sizing:border-box;"></div>
<div style="left:1559px;top:442px;width:0;height:0;border-left:4px solid transparent;border-right:4px solid transparent;border-bottom:4px solid #9a9c9e;"></div>
<svg style="position:absolute;left:0;top:0;" width="290" height="83"><defs><path id="arc" d="M28.81,52.09 A63.3,63.3 0 0 1 130.67,29.51"/></defs><text font-family="Liberation Sans" font-weight="700" font-size="16" fill="#b9bdbf" stroke="#b9bdbf" stroke-width="0.9"><textPath href="#arc" textLength="122.6" lengthAdjust="spacing">EU REGULATED</textPath></text><path d="M37.61,49.27 A56.5,56.5 0 0 1 123.82,32.52" fill="none" stroke="#b9bdbf" stroke-width="1.6"/><text x="0" y="0" transform="translate(51.5,49) rotate(-14)" font-family="Liberation Sans" font-size="13" fill="#b9bdbf" stroke="#b9bdbf" stroke-width="0.4">№ 216/13</text><polygon points="28.00,56.80 28.94,59.31 31.61,59.43 29.52,61.09 30.23,63.67 28.00,62.20 25.77,63.67 26.48,61.09 24.39,59.43 27.06,59.31" fill="#b9bdbf"/><polygon points="45.50,53.00 46.44,55.51 49.11,55.63 47.02,57.29 47.73,59.87 45.50,58.40 43.27,59.87 43.98,57.29 41.89,55.63 44.56,55.51" fill="#b9bdbf"/><polygon points="63.50,49.70 64.44,52.21 67.11,52.33 65.02,53.99 65.73,56.57 63.50,55.10 61.27,56.57 61.98,53.99 59.89,52.33 62.56,52.21" fill="#b9bdbf"/><polygon points="81.50,45.90 82.44,48.41 85.11,48.53 83.02,50.19 83.73,52.77 81.50,51.30 79.27,52.77 79.98,50.19 77.89,48.53 80.56,48.41" fill="#b9bdbf"/><polygon points="99.00,42.10 99.94,44.61 102.61,44.73 100.52,46.39 101.23,48.97 99.00,47.50 96.77,48.97 97.48,46.39 95.39,44.73 98.06,44.61" fill="#b9bdbf"/><polygon points="116.50,38.80 117.44,41.31 120.11,41.43 118.02,43.09 118.73,45.67 116.50,44.20 114.27,45.67 114.98,43.09 112.89,41.43 115.56,41.31" fill="#b9bdbf"/><polygon points="134.50,35.00 135.44,37.51 138.11,37.63 136.02,39.29 136.73,41.87 134.50,40.40 132.27,41.87 132.98,39.29 130.89,37.63 133.56,37.51" fill="#b9bdbf"/><text x="0" y="0" transform="translate(37,80) rotate(-14)" font-family="Liberation Sans" font-size="17" fill="#b9bdbf" stroke="#b9bdbf" stroke-width="0.7" textLength="55" lengthAdjust="spacingAndGlyphs">CySEC</text><path fill-rule="evenodd" fill="#0b73ae" d="M152.4,15.8 H173.4 A10,10 0 0 1 183.4,25.8 V36.4 A10,10 0 0 1 173.4,46.4 H152.9 A10,10 0 0 1 142.9,36.4 V25.8 A10,10 0 0 1 152.9,15.8 Z M156.2,23.8 H170.2 A4.2,4.2 0 0 1 174.4,28 V34.6 A4.2,4.2 0 0 1 170.2,38.8 H156.2 A4.2,4.2 0 0 1 152,34.6 V28 A4.2,4.2 0 0 1 156.2,23.8 Z"/><path fill="#6c6d6f" d="M189.1,16.3 H220 V22.9 H197.9 V20.8 L192.1,26.4 L197.9,31.6 V29.3 H214.2 V26.9 L220,32.2 L214.2,37.7 V34.8 H197.9 V45.9 H189.1 Z"/><text x="95.5" y="68.3" font-family="Liberation Sans" font-weight="900" font-size="19.19" fill="#0b73ae" textLength="106.5" lengthAdjust="spacingAndGlyphs" stroke="#0b73ae" stroke-width="0.9">OPTION</text><text x="204.2" y="68.3" font-family="Liberation Sans" font-weight="900" font-size="19.19" fill="#6c6d6f" textLength="63" lengthAdjust="spacingAndGlyphs" stroke="#6c6d6f" stroke-width="0.9">FAIR</text><circle cx="271.6" cy="52.9" r="3.2" fill="none" stroke="#6c6d6f" stroke-width="0.8"/><text x="269.9" y="55" font-family="Liberation Sans" font-size="5" font-weight="700" fill="#6c6d6f">R</text><text x="96.5" y="77.5" font-family="Liberation Sans" font-size="9.6" letter-spacing="0.8" fill="#939597" textLength="171.5" lengthAdjust="spacingAndGlyphs">BINARY OPTIONS TRADING</text></svg>
</div></body></html>
